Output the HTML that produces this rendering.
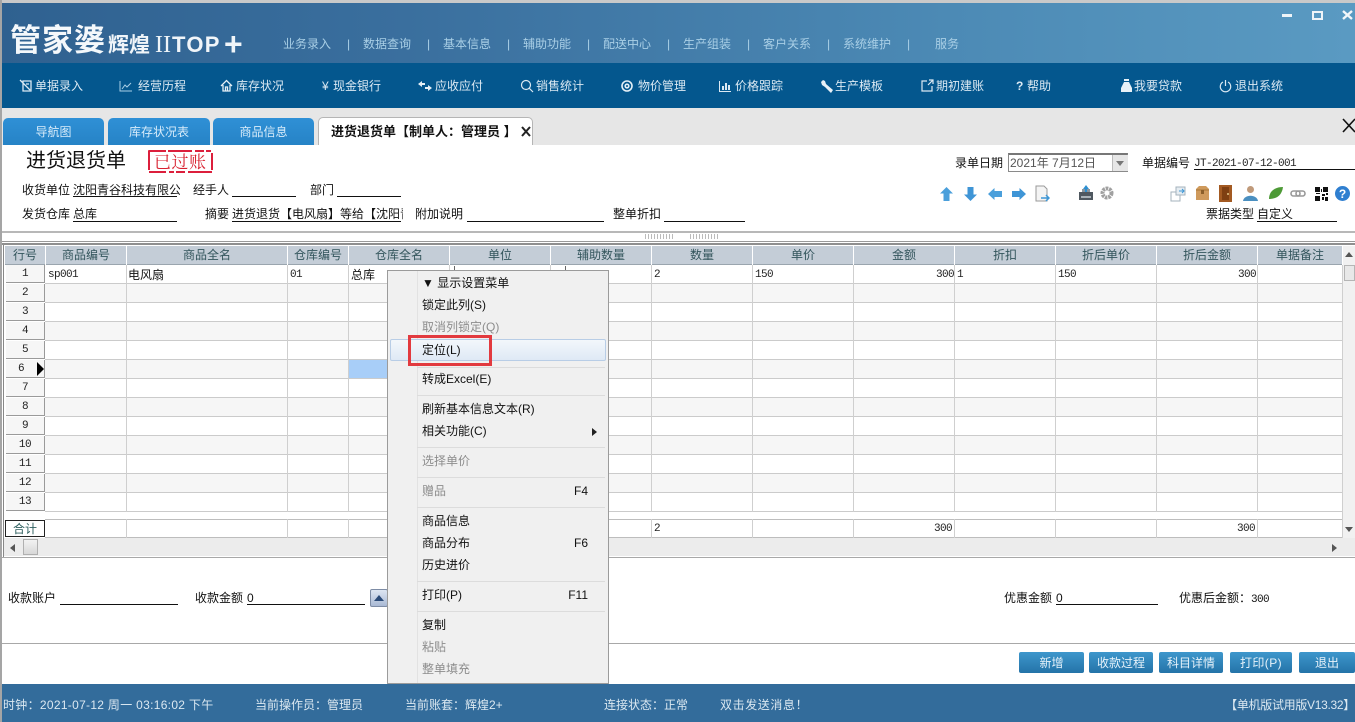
<!DOCTYPE html>
<html lang="zh"><head><meta charset="utf-8"><title>进货退货单</title>
<style>
html,body{margin:0;padding:0;background:#fff}
body{width:1355px;height:722px;position:relative;overflow:hidden;font:12px/16px "Liberation Sans","WenQuanYi Zen Hei","Noto Sans CJK SC",sans-serif;color:#111}
div,span,svg{position:absolute}
.t{white-space:nowrap}
.m{color:#a9cfe6;top:36px;white-space:nowrap}
.n{color:#dbe9f3;top:78px;white-space:nowrap}
.tab{top:118px;height:27px;background:linear-gradient(#2f90d6,#2683c6);border-radius:5px 5px 0 0;color:#d8ecfa;text-align:center;line-height:28px;font-size:12px}
.l{white-space:nowrap}
.u{height:1px;background:#111}
.h{top:246px;height:18px;background:#c4cdd7;color:#33555c;text-align:center;line-height:19px;border-bottom:1px solid #9aa5ae}
.v{top:265px;width:1px;height:273px;background:#cfcfcf}
.r{left:6px;width:38px;height:17px;background:#f6f6f6;border-right:1px solid #9a9a9a;border-bottom:1px solid #9a9a9a;text-align:center;font:11px/19px "Liberation Mono",monospace;color:#222;letter-spacing:-.5px}
.c{white-space:nowrap;font:11px/16px "Liberation Mono",monospace;letter-spacing:-.6px;color:#222}
.i{left:422px;white-space:nowrap;color:#111;font-family:"Liberation Sans","Noto Sans CJK SC",sans-serif}
.g{color:#8d8d8d}
.s{left:417px;width:188px;height:1px;background:#dcdcdc}
.k{left:560px;width:30px;text-align:right;color:#111}
.b{top:652px;height:21px;background:linear-gradient(#3e97cc,#2473a8);color:#e6f2fa;text-align:center;line-height:23px;border-radius:2px;font-size:12px}
.f{top:697px;color:#dbe8f1;white-space:nowrap}
</style></head><body>

<!-- title bar -->
<div style="left:0;top:0;width:1355px;height:3px;background:#c9c9c9"></div>
<div style="left:0;top:3px;width:1355px;height:60px;background:linear-gradient(90deg,#2f6190 0,#3a6f9e 30%,#4c8ab5 70%,#5a9ac2 100%)"></div>
<div style="left:0;top:0;width:2px;height:722px;background:#a5a5a5;z-index:9"></div>

<div class="t" style="left:10px;top:22px;font-size:31px;line-height:38px;font-weight:bold;color:#f4f8fb;letter-spacing:1px">管家婆</div>
<div class="t" style="left:108px;top:33px;font-size:21px;line-height:26px;font-weight:bold;color:#f0f5f9">辉煌</div>
<div class="t" style="left:155px;top:31px;font:24px/28px 'Liberation Serif',serif;color:#eef4f8;letter-spacing:0">II</div>
<div class="t" style="left:172px;top:32px;font:bold 22px/26px 'Liberation Sans',sans-serif;color:#f0f5f9;letter-spacing:1.300px">TOP</div>
<div class="t" style="left:224px;top:28px;font:bold 32px/32px 'Liberation Sans',sans-serif;color:#f0f5f9">+</div>

<div class="m" style="left:283px">业务录入</div><div class="m" style="left:347px">|</div>
<div class="m" style="left:363px">数据查询</div><div class="m" style="left:427px">|</div>
<div class="m" style="left:443px">基本信息</div><div class="m" style="left:507px">|</div>
<div class="m" style="left:523px">辅助功能</div><div class="m" style="left:587px">|</div>
<div class="m" style="left:603px">配送中心</div><div class="m" style="left:667px">|</div>
<div class="m" style="left:683px">生产组装</div><div class="m" style="left:747px">|</div>
<div class="m" style="left:763px">客户关系</div><div class="m" style="left:827px">|</div>
<div class="m" style="left:843px">系统维护</div><div class="m" style="left:907px">|</div>
<div class="m" style="left:935px">服务</div>

<!-- window buttons -->
<div style="left:1282px;top:14px;width:10px;height:3px;background:#eef4f8"></div>
<div style="left:1312px;top:11px;width:7px;height:5px;border:2px solid #eef4f8"></div>
<svg style="left:1342px;top:10px" width="11" height="10"><path d="M1 1L10 9M10 1L1 9" stroke="#f2f6f9" stroke-width="2.4"/></svg>

<!-- nav bar -->
<div style="left:0;top:63px;width:1355px;height:45px;background:#04578e"></div>
<svg style="left:19px;top:79px" width="14" height="14" fill="none" stroke="#dbe9f3" stroke-width="1.3"><path d="M4 2H12V12H4ZM1 1L11 11M7 5H10"/></svg>
<div class="n" style="left:35px">单据录入</div>
<svg style="left:119px;top:80px" width="14" height="12" fill="none" stroke="#a9cfe6"><path d="M1 1V11H13M3 9L6 5L8 7L12 3"/></svg>
<div class="n" style="left:138px">经营历程</div>
<svg style="left:220px;top:79px" width="13" height="14" fill="none" stroke="#e4eff6" stroke-width="1.3"><path d="M1 7L6.500 1.500L12 7M3 6V12H10V6M5.500 12V8H7.500V12"/></svg>
<div class="n" style="left:236px">库存状况</div>
<div class="n" style="left:322px">¥</div>
<div class="n" style="left:333px">现金银行</div>
<svg style="left:418px;top:81px" width="14" height="10" fill="#e4eff6"><path d="M0 3L4 0V2H7V4H4V6ZM14 7L10 4V6H7V8H10V10Z"/></svg>
<div class="n" style="left:435px">应收应付</div>
<svg style="left:520px;top:79px" width="14" height="14" fill="none" stroke="#dbe9f3" stroke-width="1.2"><circle cx="6" cy="6" r="4.500"/><path d="M9 9L13 13"/></svg>
<div class="n" style="left:536px">销售统计</div>
<svg style="left:620px;top:79px" width="14" height="14" fill="none" stroke="#e4eff6" stroke-width="1.6"><circle cx="7" cy="7" r="5"/><circle cx="7" cy="7" r="1.800"/></svg>
<div class="n" style="left:638px">物价管理</div>
<svg style="left:719px;top:81px" width="12" height="11" fill="#dbe9f3"><path d="M0 0H1V10H12V11H0ZM3 5H5V9H3ZM6 2H8V9H6ZM9 4H11V9H9Z"/></svg>
<div class="n" style="left:735px">价格跟踪</div>
<svg style="left:820px;top:80px" width="13" height="13" fill="#e8f1f7"><path d="M1 2L3 0L5 1L6 4L13 10L11 13L5 7L2 5Z"/></svg>
<div class="n" style="left:835px">生产模板</div>
<svg style="left:921px;top:79px" width="13" height="13" fill="none" stroke="#dbe9f3" stroke-width="1.2"><path d="M6 2H1V12H11V7M7 6L12 1M8 1H12V5"/></svg>
<div class="n" style="left:936px">期初建账</div>
<div class="n" style="left:1016px;font-weight:bold">?</div>
<div class="n" style="left:1027px">帮助</div>
<svg style="left:1121px;top:79px" width="11" height="13" fill="#e8f1f7"><path d="M3 0H8V2H3ZM3 3H8L11 9V13H0V9Z"/></svg>
<div class="n" style="left:1134px">我要贷款</div>
<svg style="left:1219px;top:79px" width="13" height="14" fill="none" stroke="#dbe9f3" stroke-width="1.2"><path d="M4 3A5.200 5.200 0 1 0 9 3M6.500 1V7"/></svg>
<div class="n" style="left:1235px">退出系统</div>

<!-- tab strip -->
<div style="left:0;top:108px;width:1355px;height:37px;background:#e6e6e6"></div>
<div class="tab" style="left:3px;width:101px">导航图</div>
<div class="tab" style="left:108px;width:102px">库存状况表</div>
<div class="tab" style="left:213px;width:101px">商品信息</div>
<div style="left:318px;top:117px;width:215px;height:28px;background:#fff;border:1px solid #b5b5b5;border-bottom:0;border-radius:5px 5px 0 0;box-sizing:border-box"></div>
<div class="t" style="left:331px;top:124px;font-weight:bold;font-size:13px;color:#111">进货退货单【制单人：管理员 】</div>
<svg style="left:521px;top:126px" width="10" height="11"><path d="M1 1L9 10M9 1L1 10" stroke="#222" stroke-width="2"/></svg>
<svg style="left:1342px;top:118px" width="13" height="16"><path d="M1 1L13 14M13 1L1 14" stroke="#111" stroke-width="1.600"/></svg>

<!-- form header -->
<div class="t" style="left:26px;top:149px;font-size:20px;line-height:24px;color:#111">进货退货单</div>
<svg style="left:146px;top:149px" width="69" height="25" fill="none"><path d="M3 2H66V23H3Z" stroke="#dc1f3c" stroke-width="2" stroke-dasharray="17 2 24 3 9 2 5 3" stroke-linejoin="round"/></svg>
<div class="t" style="left:154px;top:151px;font:17px/20px 'Noto Serif CJK SC',serif;color:#d8202f;letter-spacing:.5px">已过账</div>

<div class="l" style="left:22px;top:182px">收货单位</div>
<div class="l" style="left:73px;top:182px;width:107px;overflow:hidden">沈阳青谷科技有限公司</div>
<div class="u" style="left:73px;top:196px;width:104px"></div>
<div class="l" style="left:193px;top:182px">经手人</div><div class="u" style="left:232px;top:196px;width:64px"></div>
<div class="l" style="left:310px;top:182px">部门</div><div class="u" style="left:337px;top:196px;width:64px"></div>

<div class="l" style="left:22px;top:206px">发货仓库</div>
<div class="l" style="left:73px;top:206px">总库</div><div class="u" style="left:73px;top:221px;width:104px"></div>
<div class="l" style="left:205px;top:206px">摘要</div>
<div class="l" style="left:232px;top:206px;width:171px;overflow:hidden">进货退货【电风扇】等给【沈阳青谷</div><div class="u" style="left:232px;top:221px;width:169px"></div>
<div class="l" style="left:415px;top:206px">附加说明</div><div class="u" style="left:467px;top:221px;width:137px"></div>
<div class="l" style="left:613px;top:206px">整单折扣</div><div class="u" style="left:664px;top:221px;width:81px"></div>

<div class="l" style="left:955px;top:155px">录单日期</div>
<div style="left:1008px;top:153px;width:120px;height:19px;border:1px solid #8a8a8a;border-top:2px solid #777;box-sizing:border-box;background:#fff"></div>
<div class="l" style="left:1010px;top:155px;color:#555">2021年 7月12日</div>
<div style="left:1112px;top:155px;width:15px;height:16px;background:#e6e6e6;border-left:1px solid #bbb"></div>
<svg style="left:1116px;top:161px" width="8" height="5"><path d="M0 0H8L4 5Z" fill="#777"/></svg>
<div class="l" style="left:1142px;top:155px">单据编号</div>
<div class="c" style="left:1194px;top:156px">JT-2021-07-12-001</div>
<div class="u" style="left:1194px;top:169px;width:161px"></div>
<div class="l" style="left:1206px;top:206px">票据类型</div>
<div class="l" style="left:1257px;top:206px">自定义</div><div class="u" style="left:1257px;top:221px;width:80px"></div>

<!-- toolbar icons -->
<svg style="left:940px;top:187px" width="13" height="14" fill="#4a9fdb"><path d="M6.500 0L13 6.500H9.500V14H3.500V6.500H0Z"/></svg>
<svg style="left:964px;top:187px" width="13" height="14" fill="#3f95d6"><path d="M6.500 14L13 7.500H9.500V0H3.500V7.500H0Z"/></svg>
<svg style="left:988px;top:188px" width="14" height="12" fill="#4a9fdb"><path d="M0 6L6.500 0V3H14V9H6.500V12Z"/></svg>
<svg style="left:1012px;top:188px" width="14" height="12" fill="#3f95d6"><path d="M14 6L7.500 0V3H0V9H7.500V12Z"/></svg>
<svg style="left:1035px;top:185px" width="15" height="18"><path d="M1 1H9L12 4V16H1Z" fill="#f4f4f4" stroke="#9a9a9a"/><path d="M6 13H14M11 10L14 13L11 16" stroke="#3d97d6" stroke-width="1.500" fill="none"/></svg>
<svg style="left:1078px;top:185px" width="16" height="16"><path d="M1 7H15V15H1Z" fill="#4f5860"/><path d="M4 7V4H12V7" fill="#8a96a0"/><path d="M8 0L11 4H9V7H7V4H5Z" fill="#2e8fd0"/><path d="M3 11H13V13H3Z" fill="#aab2b8"/></svg>
<svg style="left:1100px;top:186px" width="14" height="14"><circle cx="7" cy="7" r="4.500" fill="none" stroke="#a0a0a0" stroke-width="4" stroke-dasharray="2.500 .8"/><circle cx="7" cy="7" r="1.800" fill="#fff"/></svg>
<svg style="left:1170px;top:186px" width="17" height="16"><path d="M1 6H10V15H1Z" fill="#fff" stroke="#a5b3bd"/><path d="M6 1H15V9H6Z" fill="#e6edf2" stroke="#a5b3bd"/><path d="M9 5H14M12 3L14 5L12 7" stroke="#3d97d6" fill="none"/></svg>
<svg style="left:1195px;top:186px" width="15" height="15"><path d="M1 3L4 0H11L14 3V14H1Z" fill="#cf9a5c"/><path d="M1 4H14" stroke="#a87636"/><path d="M6 4H9V8H6Z" fill="#8c5f2a"/></svg>
<svg style="left:1219px;top:185px" width="13" height="17"><path d="M0 0H13V17H0Z" fill="#a35a22"/><path d="M3 2H10V15H3Z" fill="#7f3f12"/><circle cx="9" cy="9" r="1" fill="#e5c98a"/></svg>
<svg style="left:1243px;top:185px" width="15" height="16"><circle cx="7.500" cy="4.500" r="3.500" fill="#c09a7a"/><path d="M0 16C1 9 14 9 15 16Z" fill="#4a8fc0"/></svg>
<svg style="left:1268px;top:186px" width="15" height="14"><path d="M1 13C1 5 7 1 15 1C14 9 9 13 1 13Z" fill="#4d9a36"/></svg>
<svg style="left:1290px;top:190px" width="16" height="7" fill="none" stroke="#999" stroke-width="1.600"><rect x="1" y="1" width="9" height="5" rx="2.500"/><rect x="6" y="1" width="9" height="5" rx="2.500"/></svg>
<svg style="left:1315px;top:187px" width="13" height="14" fill="#111"><path d="M0 0H5V5H0ZM8 0H13V5H8ZM0 9H5V14H0ZM7 7H10V9H7ZM10 10H13V14H10ZM6 2H7V5H6ZM1 6H5V7H1ZM7 10H9V13H7ZM11 6H13V8H11Z"/></svg>
<svg style="left:1335px;top:186px" width="15" height="15"><circle cx="7.500" cy="7.500" r="7.500" fill="#2f7fd0"/><text x="7.500" y="12" font-size="12" font-weight="bold" text-anchor="middle" fill="#fff" font-family="Liberation Sans">?</text></svg>

<!-- splitter -->
<div style="left:0;top:231px;width:1355px;height:2px;background:#b8b8b8"></div>
<div style="left:645px;top:234px;width:30px;height:5px;background:repeating-linear-gradient(90deg,#bbb 0 1px,#fff 1px 3px)"></div>
<div style="left:690px;top:234px;width:30px;height:5px;background:repeating-linear-gradient(90deg,#bbb 0 1px,#fff 1px 3px)"></div>
<div style="left:2px;top:241px;width:1353px;height:1px;background:#999"></div>
<div style="left:2px;top:243px;width:1353px;height:2px;background:#8f8f8f"></div>
<div style="left:3px;top:245px;width:1px;height:312px;background:#888"></div>

<!-- grid body -->
<div style="left:45px;top:265px;width:1297px;height:247px;background:repeating-linear-gradient(to bottom,#fff 0 18px,#cbcbcb 18px 19px,#f6f6f6 19px 37px,#cbcbcb 37px 38px)"></div>
<div style="left:45px;top:519px;width:1297px;height:1px;background:#bdbdbd"></div>
<div style="left:45px;top:537px;width:1297px;height:1px;background:#bdbdbd"></div>

<!-- headers -->
<div class="h" style="left:5px;width:40px">行号</div>
<div class="h" style="left:46px;width:80px">商品编号</div>
<div class="h" style="left:127px;width:160px">商品全名</div>
<div class="h" style="left:288px;width:60px">仓库编号</div>
<div class="h" style="left:349px;width:100px">仓库全名</div>
<div class="h" style="left:450px;width:100px">单位</div>
<div class="h" style="left:551px;width:100px">辅助数量</div>
<div class="h" style="left:652px;width:100px">数量</div>
<div class="h" style="left:753px;width:100px">单价</div>
<div class="h" style="left:854px;width:100px">金额</div>
<div class="h" style="left:955px;width:100px">折扣</div>
<div class="h" style="left:1056px;width:100px">折后单价</div>
<div class="h" style="left:1157px;width:100px">折后金额</div>
<div class="h" style="left:1258px;width:84px">单据备注</div>

<!-- vertical grid lines -->
<div class="v" style="left:126px"></div><div class="v" style="left:287px"></div><div class="v" style="left:348px"></div>
<div class="v" style="left:449px"></div><div class="v" style="left:550px"></div><div class="v" style="left:651px"></div>
<div class="v" style="left:752px"></div><div class="v" style="left:853px"></div><div class="v" style="left:954px"></div>
<div class="v" style="left:1055px"></div><div class="v" style="left:1156px"></div><div class="v" style="left:1257px"></div>
<div class="v" style="left:1342px"></div>
<div style="left:45px;top:512px;width:1297px;height:7px;background:#fff"></div>

<!-- row headers -->
<div class="r" style="top:265px">1</div><div class="r" style="top:284px">2</div><div class="r" style="top:303px">3</div>
<div class="r" style="top:322px">4</div><div class="r" style="top:341px">5</div><div class="r" style="top:360px;text-indent:-8px">6</div>
<div class="r" style="top:379px">7</div><div class="r" style="top:398px">8</div><div class="r" style="top:417px">9</div>
<div class="r" style="top:436px">10</div><div class="r" style="top:455px">11</div><div class="r" style="top:474px">12</div>
<div class="r" style="top:493px">13</div>
<svg style="left:37px;top:362px" width="7" height="14"><path d="M0 0L7 7L0 14Z" fill="#000"/></svg>
<div style="left:5px;top:520px;width:40px;height:17px;border:1px solid #222;box-sizing:border-box;background:#fff;text-align:center;line-height:17px;color:#2f5f5f">合计</div>

<!-- row content -->
<div class="c" style="left:48px;top:267px">sp001</div>
<div class="t" style="left:128px;top:267px">电风扇</div>
<div class="c" style="left:290px;top:267px">01</div>
<div class="t" style="left:351px;top:267px">总库</div>
<div style="left:454px;top:266px;width:1px;height:4px;background:#666"></div>
<div style="left:565px;top:266px;width:1px;height:4px;background:#666"></div>
<div class="c" style="left:654px;top:267px">2</div>
<div class="c" style="left:755px;top:267px">150</div>
<div class="c" style="left:936px;top:267px">300</div>
<div class="c" style="left:957px;top:267px">1</div>
<div class="c" style="left:1058px;top:267px">150</div>
<div class="c" style="left:1238px;top:267px">300</div>
<div style="left:349px;top:360px;width:40px;height:18px;background:#a8cef8"></div>
<div class="c" style="left:654px;top:521px">2</div>
<div class="c" style="left:934px;top:521px">300</div>
<div class="c" style="left:1237px;top:521px">300</div>

<!-- scrollbars -->
<div style="left:1343px;top:246px;width:12px;height:292px;background:#f1f1f1"></div>
<svg style="left:1345px;top:252px" width="8" height="5"><path d="M4 0L8 5H0Z" fill="#555"/></svg>
<div style="left:1344px;top:265px;width:11px;height:16px;background:#e8e8e8;border:1px solid #b5b5b5;box-sizing:border-box"></div>
<svg style="left:1345px;top:527px" width="8" height="5"><path d="M0 0H8L4 5Z" fill="#555"/></svg>
<div style="left:4px;top:538px;width:1351px;height:18px;background:#ececec"></div>
<svg style="left:10px;top:544px" width="5" height="8"><path d="M5 0V8L0 4Z" fill="#555"/></svg>
<div style="left:23px;top:539px;width:15px;height:16px;background:linear-gradient(#f2f2f2,#d8d8d8);border:1px solid #b0b0b0;box-sizing:border-box"></div>
<svg style="left:1332px;top:544px" width="5" height="8"><path d="M0 0V8L5 4Z" fill="#555"/></svg>
<div style="left:2px;top:557px;width:1353px;height:1px;background:#a8a8a8"></div>

<!-- bottom form -->
<div class="l" style="left:8px;top:590px">收款账户</div><div class="u" style="left:60px;top:604px;width:118px"></div>
<div class="l" style="left:195px;top:590px">收款金额</div><div class="l" style="left:247px;top:590px">0</div><div class="u" style="left:247px;top:604px;width:118px"></div>
<div style="left:370px;top:589px;width:18px;height:18px;background:linear-gradient(#dde5f2,#a9b9d4);border:1px solid #7d8ca5;box-sizing:border-box;border-radius:2px"></div>
<svg style="left:374px;top:595px" width="10" height="6"><path d="M5 0L10 6H0Z" fill="#2a4a78"/></svg>
<div class="l" style="left:1004px;top:590px">优惠金额</div><div class="l" style="left:1056px;top:590px">0</div><div class="u" style="left:1056px;top:604px;width:102px"></div>
<div class="l" style="left:1179px;top:590px">优惠后金额：<span style="position:static;font:11px 'Liberation Mono',monospace;letter-spacing:-.6px">300</span></div>
<div style="left:2px;top:643px;width:1353px;height:1px;background:#a8a8a8"></div>

<!-- buttons -->
<div class="b" style="left:1019px;width:65px">新增</div>
<div class="b" style="left:1089px;width:64px">收款过程</div>
<div class="b" style="left:1159px;width:64px">科目详情</div>
<div class="b" style="left:1230px;width:62px;letter-spacing:.4px">打印(P)</div>
<div class="b" style="left:1299px;width:56px">退出</div>

<!-- status bar -->
<div style="left:0;top:684px;width:1355px;height:38px;background:#336c9b"></div>
<div class="f" style="left:3px;letter-spacing:.3px">时钟：2021-07-12 周一 03:16:02 下午</div>
<div class="f" style="left:255px">当前操作员：管理员</div>
<div class="f" style="left:405px">当前账套：辉煌2+</div>
<div class="f" style="left:604px">连接状态：正常</div>
<div class="f" style="left:720px;letter-spacing:.6px">双击发送消息！</div>
<div class="f" style="left:1225px;width:130px;text-align:right;overflow:hidden;letter-spacing:-.3px">【单机版试用版V13.32】</div>

<!-- context menu -->
<div style="left:387px;top:270px;width:222px;height:414px;background:#f0f0f0;border:1px solid #9b9b9b;box-sizing:border-box;z-index:1"></div>
<div style="left:417px;top:271px;width:1px;height:412px;background:#e2e2e2;z-index:1"></div>
<div style="z-index:2;left:0;top:0;width:1355px;height:722px">
<div style="left:390px;top:339px;width:216px;height:22px;background:linear-gradient(#f3f7fb,#dfe9f5);border:1px solid #b8cde6;box-sizing:border-box;border-radius:2px"></div>
<div class="i" style="top:275px">▼ 显示设置菜单</div>
<div class="i" style="top:297px">锁定此列(S)</div>
<div class="i g" style="top:319px">取消列锁定(Q)</div>
<div class="i" style="top:342px">定位(L)</div>
<div class="s" style="top:367px"></div>
<div class="i" style="top:371px">转成Excel(E)</div>
<div class="s" style="top:395px"></div>
<div class="i" style="top:401px">刷新基本信息文本(R)</div>
<div class="i" style="top:423px">相关功能(C)</div>
<svg style="left:592px;top:428px" width="5" height="8"><path d="M0 0L5 4L0 8Z" fill="#222"/></svg>
<div class="s" style="top:447px"></div>
<div class="i g" style="top:453px">选择单价</div>
<div class="s" style="top:477px"></div>
<div class="i g" style="top:483px">赠品</div><div class="k g" style="top:483px;left:558px">F4</div>
<div class="s" style="top:507px"></div>
<div class="i" style="top:513px">商品信息</div>
<div class="i" style="top:535px">商品分布</div><div class="k" style="top:535px;left:558px">F6</div>
<div class="i" style="top:557px">历史进价</div>
<div class="s" style="top:581px"></div>
<div class="i" style="top:587px">打印(P)</div><div class="k" style="top:587px;left:558px">F11</div>
<div class="s" style="top:611px"></div>
<div class="i" style="top:617px">复制</div>
<div class="i g" style="top:639px">粘贴</div>
<div class="i g" style="top:661px">整单填充</div>
<div style="left:408px;top:335px;width:84px;height:31px;border:3px solid #e23a3f;box-sizing:border-box"></div>
</div>
</body></html>
